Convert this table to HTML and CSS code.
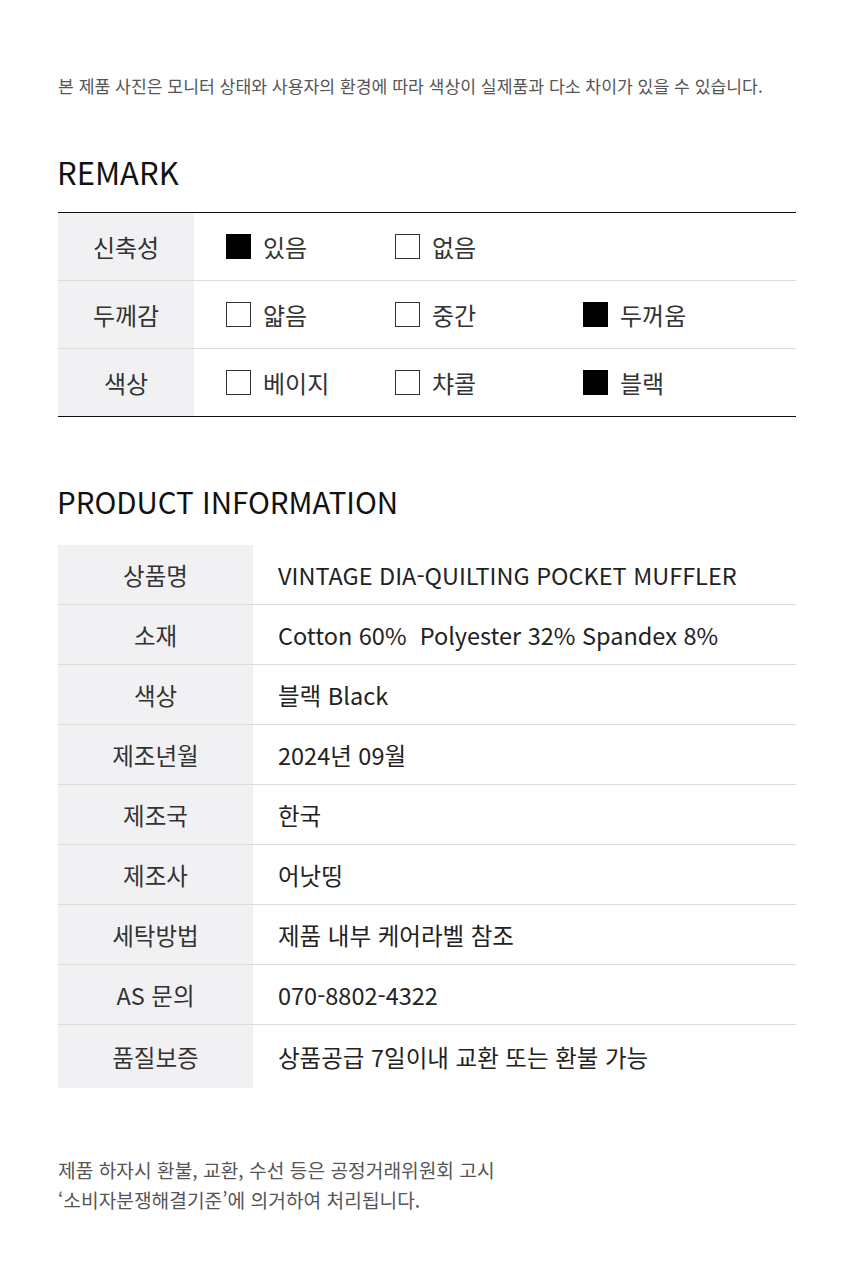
FILE: index.html
```html
<!DOCTYPE html>
<html lang="ko">
<head>
<meta charset="utf-8">
<link rel="stylesheet" href="styles.css">
</head>
<body>
<div class="page">
  <p class="notice">본 제품 사진은 모니터 상태와 사용자의 환경에 따라 색상이 실제품과 다소 차이가 있을 수 있습니다.</p>

  <h2 class="title remark-title">REMARK</h2>
  <div class="remark">
    <div class="r-row">
      <div class="r-label">신축성</div>
      <div class="r-opts">
        <div class="opt"><span class="box on"></span>있음</div>
        <div class="opt"><span class="box"></span>없음</div>
        <div class="opt"></div>
      </div>
    </div>
    <div class="r-row">
      <div class="r-label">두께감</div>
      <div class="r-opts">
        <div class="opt"><span class="box"></span>얇음</div>
        <div class="opt"><span class="box"></span>중간</div>
        <div class="opt"><span class="box on"></span>두꺼움</div>
      </div>
    </div>
    <div class="r-row last">
      <div class="r-label">색상</div>
      <div class="r-opts">
        <div class="opt"><span class="box"></span>베이지</div>
        <div class="opt"><span class="box"></span>챠콜</div>
        <div class="opt"><span class="box on"></span>블랙</div>
      </div>
    </div>
  </div>

  <h2 class="title info-title">PRODUCT INFORMATION</h2>
  <div class="info">
    <div class="i-row"><div class="i-label">상품명</div><div class="i-val">VINTAGE DIA-QUILTING POCKET MUFFLER</div></div>
    <div class="i-row"><div class="i-label">소재</div><div class="i-val">Cotton 60%&nbsp; Polyester 32% Spandex 8%</div></div>
    <div class="i-row"><div class="i-label">색상</div><div class="i-val">블랙 Black</div></div>
    <div class="i-row"><div class="i-label">제조년월</div><div class="i-val">2024년 09월</div></div>
    <div class="i-row"><div class="i-label">제조국</div><div class="i-val">한국</div></div>
    <div class="i-row"><div class="i-label">제조사</div><div class="i-val">어낫띵</div></div>
    <div class="i-row"><div class="i-label">세탁방법</div><div class="i-val">제품 내부 케어라벨 참조</div></div>
    <div class="i-row"><div class="i-label">AS 문의</div><div class="i-val">070-8802-4322</div></div>
    <div class="i-row last"><div class="i-label">품질보증</div><div class="i-val">상품공급 7일이내 교환 또는 환불 가능</div></div>
  </div>

  <p class="foot">제품 하자시 환불, 교환, 수선 등은 공정거래위원회 고시<br>‘소비자분쟁해결기준’에 의거하여 처리됩니다.</p>
</div>
</body>
</html>
```

FILE: styles.css
```css
html, body {
  margin: 0;
  padding: 0;
  background: #fff;
}
body {
  font-family: "Noto Sans CJK KR", "Noto Sans", sans-serif;
  color: #222;
}
.page {
  width: 738px;
  padding: 0 0 0 58px;
}
.notice {
  margin: 0;
  padding-top: 74px;
  font-size: 17.2px;
  line-height: 24px;
  color: #555;
}
.title {
  margin: 0;
  font-weight: 400;
  line-height: 36px;
  color: #111;
}
.remark-title {
  font-size: 31px;
  margin-top: 56px;
  margin-left: -1px;
}
.remark {
  margin-top: 22px;
  border-top: 1px solid #111;
}
.r-row {
  display: flex;
  height: 67px;
  border-bottom: 1px solid #dcdcdc;
}
.r-row.last {
  border-bottom: 1px solid #111;
}
.r-label {
  width: 136px;
  background: #f1f1f3;
  display: flex;
  align-items: center;
  justify-content: center;
  font-size: 24px;
  color: #333;
}
.r-opts {
  flex: 1;
  display: grid;
  grid-template-columns: 169px 188px 1fr;
  align-items: center;
  padding-left: 32px;
  font-size: 24px;
  color: #333;
}
.opt {
  display: flex;
  align-items: center;
}
.box {
  width: 23px;
  height: 23px;
  border: 1px solid #333;
  margin-right: 12px;
  box-sizing: content-box;
}
.box.on {
  background: #000;
  border-color: #000;
}
.info-title {
  font-size: 29.5px;
  margin-top: 66px;
  margin-left: -1px;
}
.info {
  margin-top: 26px;
}
.i-row {
  display: flex;
  height: 59px;
  border-bottom: 1px solid #dcdcdc;
}
.i-row.last {
  height: 63px;
  border-bottom: none;
}
.i-label {
  width: 195px;
  flex: none;
  background: #f1f1f3;
  display: flex;
  align-items: center;
  justify-content: center;
  font-size: 23.5px;
  color: #333;
}
.i-val {
  display: flex;
  align-items: center;
  padding-left: 25px;
  font-size: 23.5px;
  color: #222;
}
.foot {
  margin: 0;
  margin-top: 67px;
  font-size: 19.2px;
  line-height: 30px;
  color: #555;
}
```
